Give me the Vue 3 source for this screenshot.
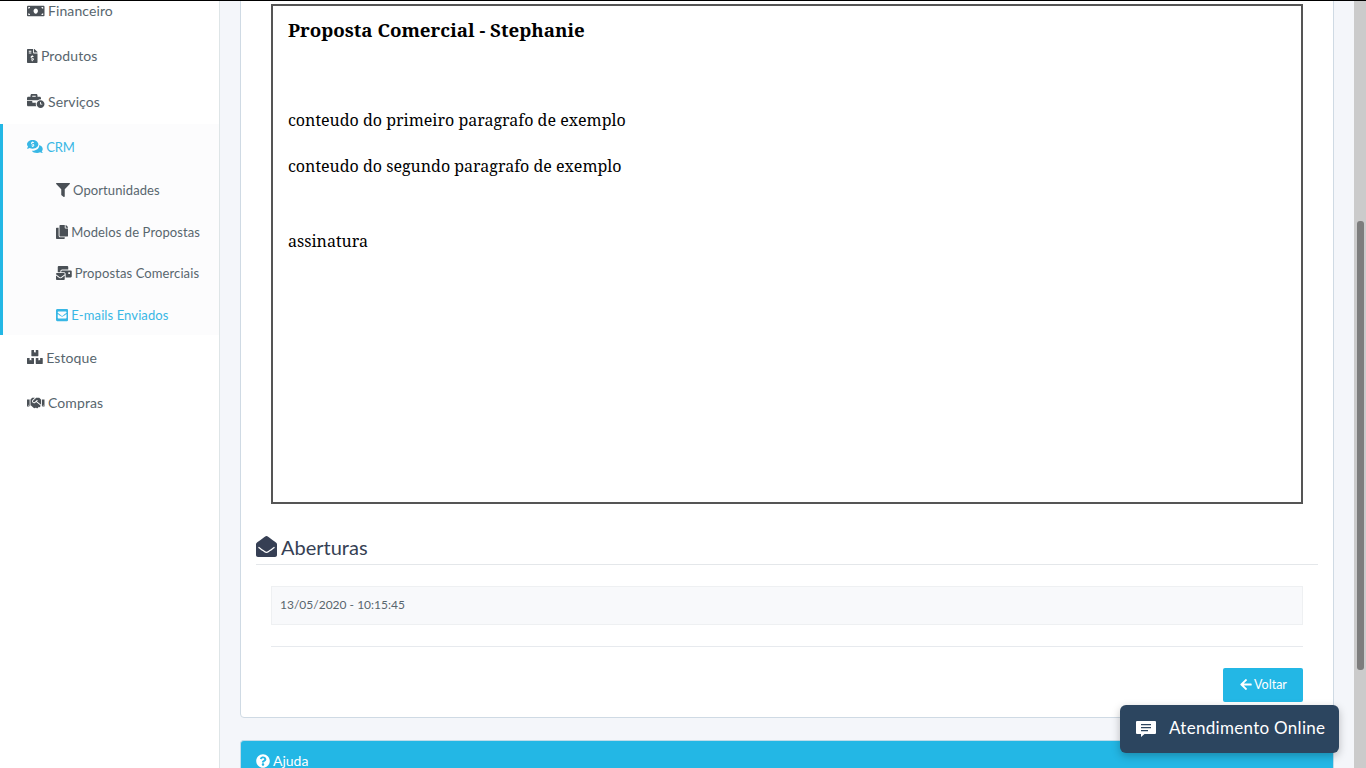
<script setup>
const subItems = [
  { label: 'Oportunidades', vb: '0 0 512 512', d: 'M487.976 0H24.028C2.71 0-8.047 25.866 7.058 40.971L192 225.941V432c0 7.831 3.821 15.17 10.237 19.662l80 55.98C298.02 518.69 320 507.493 320 487.98V225.941l184.947-184.97C520.021 25.896 509.338 0 487.976 0z', w: 14 },
  { label: 'Modelos de Propostas', vb: '0 0 448 512', d: 'M320 448v40c0 13.255-10.745 24-24 24H24c-13.255 0-24-10.745-24-24V120c0-13.255 10.745-24 24-24h72v296c0 30.879 25.121 56 56 56h168zm0-344V0H152c-13.255 0-24 10.745-24 24v368c0 13.255 10.745 24 24 24h272c13.255 0 24-10.745 24-24V128H344c-13.2 0-24-10.8-24-24zm120.971-31.029L375.029 7.029A24 24 0 0 0 358.059 0H352v96h96v-6.059a24 24 0 0 0-7.029-16.97z', w: 12.25 },
  { label: 'Propostas Comerciais', vb: '0 0 576 512', d: 'M160 448c-25.6 0-51.2-22.4-64-32-64-44.8-83.2-60.8-96-70.4V480c0 17.67 14.33 32 32 32h256c17.67 0 32-14.33 32-32V345.6c-12.8 9.6-32 25.6-96 70.4-12.8 9.6-38.4 32-64 32zm128-192H32c-17.67 0-32 14.33-32 32v16c25.6 19.2 22.4 19.2 115.2 86.4 9.6 6.4 28.8 25.6 44.8 25.6s35.2-19.2 44.8-22.4c92.8-67.2 89.6-67.2 115.2-89.6V288c0-17.67-14.33-32-32-32zm256-96H224c-17.67 0-32 14.33-32 32v32h96c33.21 0 60.59 25.42 63.71 57.82l.29-.22V416h192c17.67 0 32-14.33 32-32V192c0-17.67-14.33-32-32-32zm-32 128h-64v-64h64v64zm-352-96c0-35.29 28.71-64 64-64h224V32c0-17.67-14.33-32-32-32H96C78.33 0 64 14.33 64 32v192h96v-32z', w: 15.75 },
  { label: 'E-mails Enviados', active: true, vb: '0 0 448 512', d: 'M400 32H48C21.49 32 0 53.49 0 80v352c0 26.51 21.49 48 48 48h352c26.51 0 48-21.49 48-48V80c0-26.51-21.49-48-48-48zM178.117 262.104C87.429 196.287 88.353 196.121 64 177.167V152c0-13.255 10.745-24 24-24h272c13.255 0 24 10.745 24 24v25.167c-24.371 18.969-23.434 19.124-114.117 84.938-10.5 7.655-31.392 26.12-45.883 25.894-14.503.218-35.367-18.227-45.883-25.895zM384 217.775V360c0 13.255-10.745 24-24 24H88c-13.255 0-24-10.745-24-24V217.775c13.958 10.794 33.329 25.236 95.303 70.214 14.162 10.341 37.975 32.145 64.694 32.01 26.887.134 51.037-22.041 64.72-32.025 61.958-44.965 81.325-59.406 95.283-70.199z', w: 12.25 },
]
const boxes = 'M560 288h-80v96l-32-21.3-32 21.3v-96h-80c-8.8 0-16 7.2-16 16v192c0 8.8 7.2 16 16 16h224c8.8 0 16-7.2 16-16V304c0-8.8-7.2-16-16-16zm-384-64h224c8.8 0 16-7.2 16-16V16c0-8.8-7.2-16-16-16h-80v96l-32-21.3L256 96V0h-80c-8.8 0-16 7.2-16 16v192c0 8.8 7.2 16 16 16zm64 64h-80v96l-32-21.3L96 384v-96H16c-8.8 0-16 7.2-16 16v192c0 8.8 7.2 16 16 16h224c8.8 0 16-7.2 16-16V304c0-8.8-7.2-16-16-16z'
const handshake = 'M434.7 64h-85.9c-8 0-15.7 3-21.6 8.4l-98.3 90c-.1.1-.2.3-.3.4-16.6 15.6-16.3 40.5-2.1 56 12.7 13.9 39.4 17.6 56.1 2.7.1-.1.3-.1.4-.2l79.9-73.2c6.5-5.9 16.7-5.5 22.6 1 6 6.5 5.5 16.6-1 22.6l-26.1 23.9L504 313.8c2.9 2.4 5.5 5 7.9 7.7V128l-54.6-54.6c-5.9-6-14.1-9.4-22.6-9.4zM544 128.2v223.9c0 17.7 14.3 32 32 32h64V128.2h-96zm48 223.9c-8.8 0-16-7.2-16-16s7.2-16 16-16 16 7.2 16 16-7.2 16-16 16zM0 384h64c17.7 0 32-14.3 32-32V128.2H0V384zm48-63.9c8.8 0 16 7.2 16 16s-7.2 16-16 16-16-7.2-16-16c0-8.9 7.2-16 16-16zm435.9 18.6L334.6 217.5l-30 27.5c-29.7 27.1-75.2 24.5-101.7-4.4-26.9-29.4-24.8-74.9 4.4-101.7L289.1 64h-83.8c-8.5 0-16.6 3.4-22.6 9.4L128 128v223.9h18.3l90.5 81.9c27.4 22.3 67.7 18.1 90-9.3l.2-.2 17.9 15.5c15.9 13 39.4 10.5 52.3-5.4l31.4-38.6 5.4 4.4c13.7 11.1 33.9 9.1 45-4.7l9.5-11.7c11.2-13.8 9.1-33.9-4.6-45.1z'
const envelopeOpen = 'M512 464c0 26.51-21.49 48-48 48H48c-26.51 0-48-21.49-48-48V200.724a48 48 0 0 1 18.387-37.776c24.913-19.529 45.501-35.365 164.2-121.511C199.412 29.17 232.797-.347 256 .003c23.198-.354 56.596 29.172 73.413 41.433 118.687 86.137 139.303 101.995 164.2 121.512A48 48 0 0 1 512 200.724V464zm-65.666-196.605c-2.563-3.728-7.7-4.595-11.339-1.907-22.845 16.873-55.462 40.705-105.582 77.079-16.825 12.266-50.21 41.781-73.413 41.43-23.211.344-56.559-29.143-73.413-41.43-50.114-36.37-82.734-60.204-105.582-77.079-3.639-2.688-8.776-1.821-11.339 1.907l-9.072 13.196a7.998 7.998 0 0 0 1.839 10.967c22.887 16.899 55.454 40.69 105.303 76.868 20.274 14.781 56.524 47.813 92.264 47.573 35.724.242 71.961-32.771 92.263-47.573 49.85-36.179 82.418-59.97 105.303-76.868a7.998 7.998 0 0 0 1.839-10.967l-9.071-13.196z'
const question = 'M504 256c0 136.997-111.043 248-248 248S8 392.997 8 256C8 119.083 119.043 8 256 8s248 111.083 248 248zM262.655 90c-54.497 0-89.255 22.957-116.549 63.758-3.536 5.286-2.353 12.415 2.715 16.258l34.699 26.31c5.205 3.947 12.621 3.008 16.665-2.122 17.864-22.658 30.113-35.797 57.303-35.797 20.429 0 45.698 13.148 45.698 32.958 0 14.976-12.363 22.667-32.534 33.976C247.128 238.528 216 254.941 216 296v4c0 6.627 5.373 12 12 12h56c6.627 0 12-5.373 12-12v-1.333c0-28.462 83.186-29.647 83.186-106.667 0-58.002-60.165-102-116.531-102zM256 338c-25.365 0-46 20.635-46 46 0 25.364 20.635 46 46 46s46-20.636 46-46c0-25.365-20.635-46-46-46z'
const arrow = 'M257.5 445.1l-22.2 22.2c-9.4 9.4-24.6 9.4-33.9 0L7 273c-9.4-9.4-9.4-24.6 0-33.9L201.4 44.7c9.4-9.4 24.6-9.4 33.9 0l22.2 22.2c9.5 9.5 9.3 25-.4 34.3L136.6 216H424c13.3 0 24 10.7 24 24v32c0 13.3-10.7 24-24 24H136.6l120.5 114.8c9.8 9.3 10 24.8.4 34.3z'
</script>

<template>
  <div class="page">
    <div class="topline"></div>
    <aside class="sidebar">
      <a class="item"><svg class="ic w175" viewBox="0 0 640 512"><path fill-rule="evenodd" d="M608 64H32C14.33 64 0 78.33 0 96v320c0 17.67 14.33 32 32 32h576c17.67 0 32-14.33 32-32V96c0-17.67-14.33-32-32-32zM48 400v-64c35.35 0 64 28.65 64 64H48zm0-224v-64h64c0 35.35-28.65 64-64 64zm272 176c-44.19 0-80-42.99-80-96 0-53.02 35.82-96 80-96s80 42.98 80 96c0 53.03-35.83 96-80 96zm272 48h-64c0-35.35 28.65-64 64-64v64zm0-224c-35.35 0-64-28.65-64-64h64v64z"/></svg><span>Financeiro</span></a>
      <a class="item"><svg class="ic w105" viewBox="0 0 384 512"><path fill-rule="evenodd" d="M377 105L279.1 7c-4.5-4.5-10.6-7-17-7H256v128h128v-6.1c0-6.3-2.5-12.4-7-16.9zM224 136V0H24C10.7 0 0 10.7 0 24v464c0 13.3 10.7 24 24 24h336c13.3 0 24-10.7 24-24V160H248c-13.2 0-24-10.8-24-24zM64 72c0-4.4 3.6-8 8-8h80c4.4 0 8 3.6 8 8v16c0 4.4-3.6 8-8 8H72c-4.400 0-8-3.600-8-8V72zm0 80v-16c0-4.400 3.600-8 8-8h80c4.400 0 8 3.600 8 8v16c0 4.400-3.600 8-8 8H72c-4.400 0-8-3.600-8-8zm144 263.900V440c0 4.400-3.600 8-8 8h-16c-4.400 0-8-3.600-8-8v-24.300c-11.300-.6-22.300-4.500-31.400-11.400-3.900-2.900-4.100-8.800-.6-12.200l11.800-11.200c2.800-2.600 6.900-2.800 10.100-.7 3.900 2.400 8.300 3.700 12.800 3.700h28.100c6.500 0 11.800-5.900 11.800-13.200 0-6-3.600-11.200-8.800-12.700l-45-13.500c-18.600-5.600-31.600-23.400-31.600-43.400 0-24.500 19.100-44.400 42.700-45.100V232c0-4.400 3.600-8 8-8h16c4.400 0 8 3.600 8 8v24.300c11.300.6 22.300 4.500 31.400 11.400 3.900 2.900 4.100 8.800.6 12.200l-11.800 11.200c-2.800 2.600-6.900 2.800-10.100.7-3.900-2.400-8.300-3.700-12.800-3.700h-28.100c-6.500 0-11.800 5.900-11.800 13.200 0 6 3.600 11.200 8.800 12.700l45 13.500c18.600 5.600 31.600 23.400 31.600 43.400 0 24.500-19 44.400-42.700 45z"/></svg><span>Produtos</span></a>
      <a class="item"><svg class="ic w175" viewBox="0 0 640 512"><path fill-rule="evenodd" d="M496 224c-79.590 0-144 64.410-144 144s64.410 144 144 144 144-64.410 144-144-64.410-144-144-144zm64 150.290c0 5.340-4.370 9.710-9.710 9.710h-60.570c-5.340 0-9.710-4.370-9.710-9.710v-76.570c0-5.340 4.370-9.710 9.710-9.710h12.570c5.340 0 9.710 4.370 9.710 9.710V352h38.290c5.340 0 9.710 4.370 9.710 9.710v12.580zM496 192c5.400 0 10.720.33 16 .81V144c0-25.600-22.400-48-48-48h-80V48c0-25.600-22.400-48-48-48H176c-25.600 0-48 22.400-48 48v48H48c-25.600 0-48 22.400-48 48v80h395.120c28.600-20.090 63.350-32 100.880-32zM320 96H192V64h128v32zm6.820 224H208c-8.840 0-16-7.160-16-16v-48H0v144c0 25.600 22.400 48 48 48h291.430C327.100 423.010 320 396.350 320 368c0-16.660 2.480-32.730 6.820-48z"/></svg><span>Serviços</span></a>

      <div class="group">
        <a class="item active"><svg class="ic w158" viewBox="0 0 576 512"><path fill-rule="evenodd" d="M416 192c0-88.370-93.120-160-208-160S0 103.630 0 192c0 34.290 14.140 65.950 38.070 91.980C24.650 314.230 2.520 338.340 2.200 338.640c-2.190 2.330-2.800 5.760-1.530 8.710C1.950 350.320 4.800 352 8 352c36.600 0 66.920-12.310 88.730-25.020C128.930 342.870 167.150 352 208 352c114.880 0 208-71.630 208-160zm-224 96v-16.300c-11.300-.6-22.300-4.500-31.400-11.400-3.900-2.900-4.100-8.800-.6-12.200l11.800-11.200c2.800-2.600 6.900-2.800 10.100-.7 3.900 2.400 8.300 3.700 12.800 3.700h28.100c6.500 0 11.800-5.900 11.800-13.200 0-6-3.600-11.200-8.800-12.700l-45-13.500c-18.600-5.600-31.600-23.400-31.600-43.400 0-24.500 19.100-44.400 42.700-45.100V96c0-4.400 3.600-8 8-8h16c4.400 0 8 3.600 8 8v16.300c11.300.6 22.300 4.500 31.400 11.400 3.900 2.900 4.100 8.800.6 12.200l-11.800 11.200c-2.800 2.600-6.900 2.800-10.100.7-3.900-2.400-8.300-3.700-12.800-3.700h-28.100c-6.500 0-11.800 5.900-11.800 13.200 0 6 3.600 11.200 8.800 12.700l45 13.500c18.600 5.600 31.600 23.400 31.600 43.400 0 24.500-19 44.400-42.700 45V288c0 4.400-3.600 8-8 8h-16c-4.400 0-8-3.600-8-8zm345.930 171.980C561.860 433.950 576 402.290 576 368c0-66.940-53.490-124.200-129.330-148.100.9 6.600 1.330 13.300 1.330 20.100 0 105.870-107.660 192-240 192-10.780 0-21.320-.8-31.720-1.930C207.800 488.500 272.700 512 368 512c40.850 0 79.070-9.130 111.270-25.020C501.080 499.690 531.400 512 568 512c3.200 0 6.050-1.680 7.330-4.650 1.270-2.950.66-6.380-1.530-8.710-.32-.3-22.450-24.410-35.870-38.660z"/></svg><span class="crm">CRM</span></a>
        <a v-for="s in subItems" :key="s.label" class="sub" :class="{ active: s.active }">
          <svg class="ic" :style="{ width: s.w + 'px' }" :viewBox="s.vb"><path fill-rule="evenodd" :d="s.d"/></svg>
          <span>{{ s.label }}</span>
        </a>
      </div>

      <a class="item"><svg class="ic w158" viewBox="0 0 576 512"><path :d="boxes"/></svg><span>Estoque</span></a>
      <a class="item"><svg class="ic w175" viewBox="0 0 640 512"><path :d="handshake"/></svg><span>Compras</span></a>
    </aside>

    <main class="main">
      <section class="card">
        <div class="doc">
          <h3 class="doc-title">Proposta Comercial - Stephanie</h3>
          <p class="p1">conteudo do primeiro paragrafo de exemplo</p>
          <p class="p2">conteudo do segundo paragrafo de exemplo</p>
          <p class="p3">assinatura</p>
        </div>
        <h4 class="heading"><svg class="h-ic" viewBox="0 0 512 512"><path :d="envelopeOpen"/></svg><span>Aberturas</span></h4>
        <div class="row">13/05/2020 - 10:15:45</div>
        <hr class="rule" />
        <div class="actions">
          <button class="btn"><svg class="btn-ic" viewBox="0 0 448 512"><path :d="arrow"/></svg><span>Voltar</span></button>
        </div>
      </section>
      <section class="help">
        <svg class="help-ic" viewBox="0 0 512 512"><path fill-rule="evenodd" :d="question"/></svg><span>Ajuda</span>
      </section>
    </main>

    <div class="scrollbar"><div class="thumb"></div></div>

    <button class="chat">
      <svg class="chat-ic" viewBox="0 0 20 16"><path fill-rule="evenodd" d="M1 0h18a1 1 0 0 1 1 1v11a1 1 0 0 1-1 1H8.500L5 16v-3H1a1 1 0 0 1-1-1V1a1 1 0 0 1 1-1zM5 3v1.200h10V3zm0 3v1.200h10V6zm0 3v1.200h7V9z"/></svg>
      <span>Atendimento Online</span>
    </button>
  </div>
</template>

<style>
html, body { margin: 0; height: 100%; overflow: hidden; }
</style>

<style scoped>
.page {
  position: relative;
  display: flex;
  width: 1366px;
  height: 768px;
  overflow: hidden;
  background: #f4f6fa;
  font-family: Lato, "Noto Sans", sans-serif;
  color: #58666e;
}
.topline { position: absolute; left: 0; right: 0; top: 0; height: 1px; background: #000; z-index: 5; }
.sidebar {
  width: 219px;
  flex: none;
  background: #fff;
  border-right: 1px solid #dee5e7;
  display: flex;
  flex-direction: column;
  margin-top: -12.1px;
}
.item {
  display: flex;
  align-items: center;
  gap: 3.5px;
  height: 45.3px;
  padding-left: 27px;
  font-size: 14px;
  letter-spacing: 0.1px;
  color: #58666e;
}
.item.active { color: #38b7e5; padding-left: 24px; }
.crm { font-size: 13px; letter-spacing: -0.2px; padding-top: 2px; }
.ic { fill: #4a5056; height: 14px; flex: none; }
.active .ic { fill: #38b7e5; }
.w175 { width: 17.5px; }
.w158 { width: 15.75px; }
.w105 { width: 10.5px; }
.group { background: #fcfcfd; border-left: 3px solid #23b7e5; height: 211px; }
.sub {
  display: flex;
  align-items: center;
  height: 41.7px;
  padding-left: 53px;
  font-size: 13px;
  letter-spacing: 0.1px;
  gap: 3px;
  color: #58666e;
}
.sub.active { color: #38b7e5; }
.main {
  flex: none;
  width: 1094px;
  margin-left: 20px;
  margin-top: -20px;
}
.card {
  box-sizing: border-box;
  height: 738px;
  background: #fff;
  border: 1px solid #cfdae4;
  border-radius: 4px;
  padding: 23px 30px 0;
  margin-bottom: 22px;
}
.doc {
  box-sizing: border-box;
  height: 500px;
  border: 2px solid #555;
  padding: 0 15px;
  color: #000;
  font-family: "Noto Serif", "DejaVu Serif", serif;
  font-size: 16px;
  display: flex;
  flex-direction: column;
}
.doc-title { margin: 11px 0 0; font-size: 18.72px; line-height: 26px; }
.doc p { margin: 0; line-height: 22px; }
.p1 { padding-top: 66px; }
.p2 { padding-top: 24px; }
.p3 { padding-top: 53px; }
.heading {
  margin: 29px -15px 0;
  height: 31px;
  display: flex;
  align-items: flex-start;
  border-bottom: 1px solid #e4e7ea;
  font-size: 20px;
  font-weight: 400;
  line-height: 29px;
  color: #363f54;
}
.h-ic { width: 21px; height: 21px; fill: #363f54; margin: 3px 4px 0 0; flex: none; }
.row {
  box-sizing: border-box;
  margin-top: 21px;
  height: 39px;
  background: #f8f9fb;
  border: 1px solid #eef0f2;
  padding: 0 0 2px 8px;
  display: flex;
  align-items: center;
  font-size: 12px;
  color: #58666e;
}
.rule { margin: 21px 0 0; border: 0; border-top: 1px solid #e7eaee; }
.actions { display: flex; justify-content: flex-end; margin-top: 21px; }
.btn {
  box-sizing: border-box;
  width: 80px;
  height: 34px;
  background: #23b7e5;
  border: 0;
  border-radius: 2px;
  color: #fff;
  font-family: inherit;
  font-size: 12.5px;
  display: flex;
  align-items: center;
  justify-content: center;
  gap: 2px;
  padding: 0 0 2px 1px;
}
.btn-ic { width: 12px; height: 13px; fill: #fff; }
.help {
  box-sizing: border-box;
  height: 60px;
  background: #23b7e5;
  border: 1px solid #bfdcea;
  border-bottom: 0;
  border-radius: 4px 4px 0 0;
  padding: 10px 15px 0;
  display: flex;
  align-items: flex-start;
  gap: 3px;
  color: #fff;
  font-size: 14px;
  line-height: 20px;
}
.help-ic { width: 14px; height: 14px; fill: #fff; margin-top: 3px; }
.scrollbar {
  position: absolute;
  right: 0;
  top: 0;
  bottom: 0;
  width: 12px;
  background: #cbcbcb;
}
.thumb {
  position: absolute;
  left: 3px;
  width: 6.5px;
  top: 221px;
  height: 449px;
  background: #7d7d7d;
  border-radius: 3px;
}
.chat {
  position: absolute;
  left: 1120px;
  top: 705px;
  width: 219px;
  height: 48px;
  background: #2c455f;
  border: 0;
  border-radius: 6px;
  box-shadow: 0 3px 8px rgba(0, 0, 0, 0.25);
  color: #fff;
  font-family: inherit;
  font-size: 17px;
  letter-spacing: 0.3px;
  display: flex;
  align-items: center;
  padding: 0 0 4px 16px;
  gap: 13px;
}
.chat-ic { width: 20px; height: 16px; fill: #fff; margin-top: 4px; }
</style>
